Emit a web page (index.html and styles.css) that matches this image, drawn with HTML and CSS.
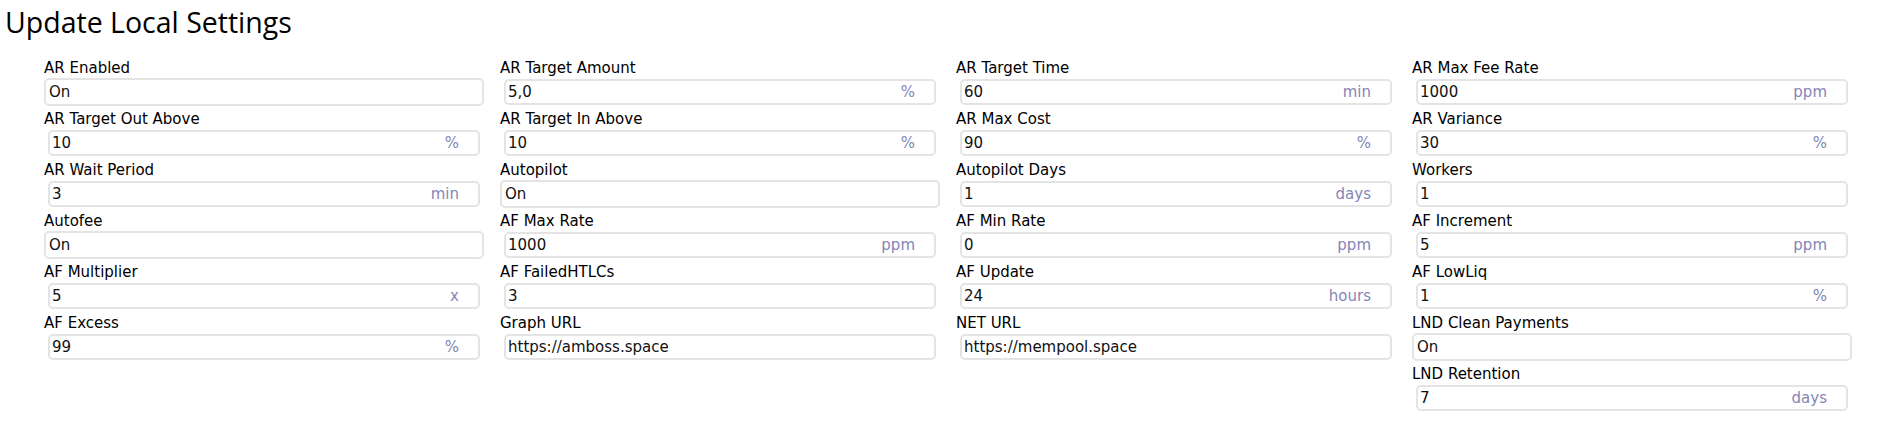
FILE: index.html
```html
<!DOCTYPE html>
<html>
<head>
<meta charset="utf-8">
<link rel="stylesheet" href="styles.css">
</head>
<body>
<h2 class="title">Update Local Settings</h2>
<div class="settings">
  <div class="col">
    <div class="field"><div class="label">AR Enabled</div><div class="select">On</div></div>
    <div class="field"><div class="label">AR Target Out Above</div><div class="group"><div class="box"><span class="val">10</span><span class="unit">%</span></div></div></div>
    <div class="field"><div class="label">AR Wait Period</div><div class="group"><div class="box"><span class="val">3</span><span class="unit">min</span></div></div></div>
    <div class="field"><div class="label">Autofee</div><div class="select">On</div></div>
    <div class="field"><div class="label">AF Multiplier</div><div class="group"><div class="box"><span class="val">5</span><span class="unit">x</span></div></div></div>
    <div class="field"><div class="label">AF Excess</div><div class="group"><div class="box"><span class="val">99</span><span class="unit">%</span></div></div></div>
  </div>
  <div class="col">
    <div class="field"><div class="label">AR Target Amount</div><div class="group"><div class="box"><span class="val">5,0</span><span class="unit">%</span></div></div></div>
    <div class="field"><div class="label">AR Target In Above</div><div class="group"><div class="box"><span class="val">10</span><span class="unit">%</span></div></div></div>
    <div class="field"><div class="label">Autopilot</div><div class="select">On</div></div>
    <div class="field"><div class="label">AF Max Rate</div><div class="group"><div class="box"><span class="val">1000</span><span class="unit">ppm</span></div></div></div>
    <div class="field"><div class="label">AF FailedHTLCs</div><div class="group"><div class="box"><span class="val">3</span></div></div></div>
    <div class="field"><div class="label">Graph URL</div><div class="group"><div class="box"><span class="val">https://amboss.space</span></div></div></div>
  </div>
  <div class="col">
    <div class="field"><div class="label">AR Target Time</div><div class="group"><div class="box"><span class="val">60</span><span class="unit">min</span></div></div></div>
    <div class="field"><div class="label">AR Max Cost</div><div class="group"><div class="box"><span class="val">90</span><span class="unit">%</span></div></div></div>
    <div class="field"><div class="label">Autopilot Days</div><div class="group"><div class="box"><span class="val">1</span><span class="unit">days</span></div></div></div>
    <div class="field"><div class="label">AF Min Rate</div><div class="group"><div class="box"><span class="val">0</span><span class="unit">ppm</span></div></div></div>
    <div class="field"><div class="label">AF Update</div><div class="group"><div class="box"><span class="val">24</span><span class="unit">hours</span></div></div></div>
    <div class="field"><div class="label">NET URL</div><div class="group"><div class="box"><span class="val">https://mempool.space</span></div></div></div>
  </div>
  <div class="col">
    <div class="field"><div class="label">AR Max Fee Rate</div><div class="group"><div class="box"><span class="val">1000</span><span class="unit">ppm</span></div></div></div>
    <div class="field"><div class="label">AR Variance</div><div class="group"><div class="box"><span class="val">30</span><span class="unit">%</span></div></div></div>
    <div class="field"><div class="label">Workers</div><div class="group"><div class="box"><span class="val">1</span></div></div></div>
    <div class="field"><div class="label">AF Increment</div><div class="group"><div class="box"><span class="val">5</span><span class="unit">ppm</span></div></div></div>
    <div class="field"><div class="label">AF LowLiq</div><div class="group"><div class="box"><span class="val">1</span><span class="unit">%</span></div></div></div>
    <div class="field"><div class="label">LND Clean Payments</div><div class="select">On</div></div>
    <div class="field"><div class="label">LND Retention</div><div class="group"><div class="box"><span class="val">7</span><span class="unit">days</span></div></div></div>
  </div>
</div>
</body>
</html>
```

FILE: styles.css
```css
html, body {
  margin: 0;
  padding: 0;
  background: #ffffff;
}
body {
  font-family: "DejaVu Sans", Verdana, sans-serif;
  color: #000;
}
.title {
  margin: 0;
  padding: 5px 0 0 5px;
  font-family: "Open Sans", "Noto Sans", sans-serif;
  font-weight: 400;
  font-size: 28.5px;
  line-height: 34px;
  color: #000;
}
.settings {
  display: grid;
  grid-template-columns: repeat(4, 440px);
  column-gap: 16px;
  padding: 20px 0 0 44px;
  align-items: start;
}
.col {
  display: flex;
  flex-direction: column;
}
.field {
  display: flex;
  flex-direction: column;
  height: 51px;
}
.label {
  font-size: 15px;
  line-height: 18px;
  height: 18px;
  white-space: nowrap;
}
.select {
  margin-top: 1px;
  height: 28px;
  box-sizing: border-box;
  border: 2px solid #e4e4e4;
  border-radius: 5px;
  padding: 0 3px;
  font-size: 15px;
  line-height: 24px;
  color: #111;
}
.group {
  margin-top: 1px;
  height: 28px;
  box-sizing: border-box;
  padding: 1px 4px;
}
.box {
  height: 26px;
  box-sizing: border-box;
  border: 2px solid #e4e4e4;
  border-radius: 5px;
  padding: 0 19px 0 2px;
  display: flex;
  justify-content: space-between;
  align-items: center;
  font-size: 15px;
  color: #111;
}
.unit {
  color: #8585b8;
}
```
